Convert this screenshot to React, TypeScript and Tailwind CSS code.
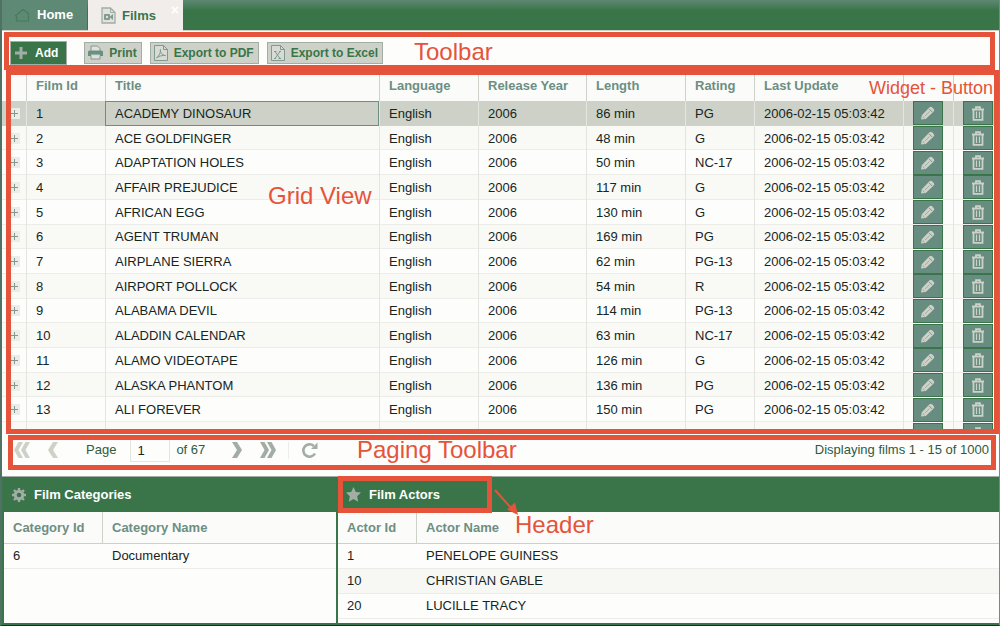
import React from "react";

type Film = { id: number; title: string; length: number; rating: string };

const films: Film[] = [
  { id: 1, title: "ACADEMY DINOSAUR", length: 86, rating: "PG" },
  { id: 2, title: "ACE GOLDFINGER", length: 48, rating: "G" },
  { id: 3, title: "ADAPTATION HOLES", length: 50, rating: "NC-17" },
  { id: 4, title: "AFFAIR PREJUDICE", length: 117, rating: "G" },
  { id: 5, title: "AFRICAN EGG", length: 130, rating: "G" },
  { id: 6, title: "AGENT TRUMAN", length: 169, rating: "PG" },
  { id: 7, title: "AIRPLANE SIERRA", length: 62, rating: "PG-13" },
  { id: 8, title: "AIRPORT POLLOCK", length: 54, rating: "R" },
  { id: 9, title: "ALABAMA DEVIL", length: 114, rating: "PG-13" },
  { id: 10, title: "ALADDIN CALENDAR", length: 63, rating: "NC-17" },
  { id: 11, title: "ALAMO VIDEOTAPE", length: 126, rating: "G" },
  { id: 12, title: "ALASKA PHANTOM", length: 136, rating: "PG" },
  { id: 13, title: "ALI FOREVER", length: 150, rating: "PG" },
];

const actors = [
  { id: 1, name: "PENELOPE GUINESS" },
  { id: 10, name: "CHRISTIAN GABLE" },
  { id: 20, name: "LUCILLE TRACY" },
];

/* ---------- icons ---------- */

function HomeIcon() {
  return (
    <svg width="17" height="16" viewBox="0 0 17 16" fill="none" stroke="#457c5b" strokeWidth="1.2" aria-hidden="true">
      <path d="M1 9 9 2.5l5.5 4V14H2.500V9" />
    </svg>
  );
}

function FilmFileIcon() {
  return (
    <svg width="15" height="17" viewBox="0 0 15 17" aria-hidden="true">
      <path d="M1 1h8.500L14 5.500V16H1Z" fill="#e3e3de" stroke="#a2ada5" strokeWidth="1.300" />
      <path d="M9.500 1v4.500H14" fill="none" stroke="#a2ada5" />
      <rect x="3" y="7" width="6" height="6" rx="1" fill="#7f9a90" />
      <path d="m8.500 10 3.500-3v6Z" fill="#7f9a90" />
      <circle cx="6" cy="10" r="1.200" fill="#e3e3de" />
    </svg>
  );
}

function PlusIcon() {
  return (
    <svg width="12" height="12" viewBox="0 0 12 12" fill="#a2ada5" aria-hidden="true">
      <path d="M4.500 0h3v4.500H12v3H7.500V12h-3V7.500H0v-3h4.500Z" />
    </svg>
  );
}

function PrintIcon() {
  return (
    <svg width="15" height="15" viewBox="0 0 15 15" aria-hidden="true">
      <path d="M3 6V1h6.500L12 3.500V6" fill="#dfe2db" stroke="#7f9a90" />
      <path d="M1.500 5.500h12Q15 5.500 15 7v4h-3V9.500H3V11H0V7q0-1.500 1.500-1.500Z" fill="#6b8f83" />
      <path d="M3 10.500v3.500h9v-3.500" fill="#dfe2db" stroke="#7f9a90" />
    </svg>
  );
}

function FileIcon({ kind }: { kind: "pdf" | "excel" }) {
  return (
    <svg width="14" height="16" viewBox="0 0 14 16" fill="none" stroke="#7f9a90" aria-hidden="true">
      <path d="M.5.5h9l4 4v11H.5Z" fill="#d8dbd3" />
      <path d="M9.500.5v4h4" />
      {kind === "pdf" ? (
        <path d="M2.500 13C5 11 7 7.500 6.500 4.500c-1 2 1.500 6 5 6C8 10 4 11.500 2.500 13Z" />
      ) : (
        <path d="m4 6.500 5 7m0-7-5 7M3 6.500h2.500M8 6.500h2M3 13.500h2M7.500 13.500H10" />
      )}
    </svg>
  );
}

function PencilIcon() {
  return (
    <svg width="16" height="16" viewBox="0 0 16 16" className="shrink-0" aria-hidden="true">
      <path d="m1 14.500.8-4.300L9.500 2.300q1.300-1.300 2.600 0l1.600 1.600q1.300 1.300 0 2.600L5.800 14Z" fill="#cdd1c7" />
      <path d="m5 11 4.500-4.500" stroke="#a2ada5" fill="none" />
      <path d="m9 3.800 3.200 3.200" stroke="#7f9a90" fill="none" />
      <path d="m2.800 11.500 1.700 1.700" stroke="#8fa59b" fill="none" />
    </svg>
  );
}

function TrashIcon() {
  return (
    <svg width="14" height="15" viewBox="0 0 14 15" fill="none" stroke="#cdd1c7" strokeWidth="1.800" className="shrink-0" aria-hidden="true">
      <path d="M1 3.500h12M5 3V1.200h4V3M2.500 4v9.800h9V4" />
      <path d="M5.500 5.500v6.500M8.500 5.500v6.500" strokeWidth="1.200" />
    </svg>
  );
}

function Chevrons({ count, flip, color }: { count: 1 | 2; flip?: boolean; color: string }) {
  const d = count === 1 ? "M0 0h5l5 8-5 8H0l5-8Z" : "M0 0h4.500l4.500 8-4.500 8H0l4.500-8ZM7 0h4.500L16 8l-4.500 8H7l4.500-8Z";
  const width = count === 1 ? 10 : 16;
  return (
    <svg width={width} height="16" viewBox={`0 0 ${width} 16`} fill={color} className={flip ? "rotate-180" : ""} aria-hidden="true">
      <path d={d} />
    </svg>
  );
}

function RefreshIcon() {
  return (
    <svg width="18" height="17" viewBox="0 0 18 17" aria-hidden="true">
      <path d="M12.800 4A6.200 6.200 0 1 0 14 11.500" fill="none" stroke="#a2ada5" strokeWidth="2.600" />
      <path d="M16.500.5v6.500H10Z" fill="#a2ada5" />
    </svg>
  );
}

function GearIcon() {
  return (
    <svg width="14" height="14" viewBox="0 0 14 14" fill="none" stroke="#a2ada5" aria-hidden="true">
      <circle cx="7" cy="7" r="3.800" strokeWidth="3" />
      <path d="M7 0v2M7 12v2M0 7h2M12 7h2M2 2l1.500 1.500M10.500 10.500 12 12M2 12l1.500-1.500M10.500 3.500 12 2" strokeWidth="2.400" />
    </svg>
  );
}

function StarIcon() {
  return (
    <svg width="15" height="15" viewBox="0 0 15 15" fill="#a2ada5" aria-hidden="true">
      <path d="m7.500 0 2.300 4.900 5.200.7-3.800 3.700.9 5.400-4.600-2.600-4.600 2.600.9-5.400L0 5.600l5.200-.7Z" />
    </svg>
  );
}

function ExpandIcon() {
  return (
    <svg width="11" height="11" viewBox="0 0 11 11" aria-hidden="true">
      <rect width="11" height="11" fill="#ecece8" />
      <path d="M5.500 2v7M2 5.500h7" stroke="#7f9a90" />
    </svg>
  );
}

/* ---------- shared pieces ---------- */

const frame = "pointer-events-none absolute z-10 border-[5px] border-[#e5533a]";
const note = "pointer-events-none absolute z-20 whitespace-nowrap text-2xl leading-6 text-[#e5533a]";
const rule = "border-l border-[#e4e5e0]";

function ToolButton({ icon, children }: { icon: React.ReactNode; children: React.ReactNode }) {
  return (
    <button className="flex h-[22px] items-center gap-1.5 border border-[#a2ada5] bg-[#cdd1c7] pr-1 pl-[3px] text-xs font-bold text-[#397548]">
      {icon}
      {children}
    </button>
  );
}

function RowButton({ label, icon }: { label: string; icon: React.ReactNode }) {
  return (
    <button
      aria-label={label}
      className="ml-[9px] flex h-6 w-[30px] items-center justify-center border border-[#397548] bg-[#668d80]"
    >
      {icon}
    </button>
  );
}

function FilmGrid() {
  const headings = ["Film Id", "Title", "Language", "Release Year", "Length", "Rating", "Last Update"];
  return (
    <div className="h-full overflow-hidden">
      <table className="h-[377px] w-full table-fixed border-separate border-spacing-0 text-left">
        <colgroup>
          <col className="w-6" />
          <col className="w-[79px]" />
          <col />
          <col className="w-[99px]" />
          <col className="w-[108px]" />
          <col className="w-[99px]" />
          <col className="w-[69px]" />
          <col className="w-[149px]" />
          <col className="w-[50px]" />
          <col className="w-[46px]" />
        </colgroup>
        <thead>
          <tr className="h-[31px] bg-[#fbfbf9] text-[#6b8f83]">
            <th className="p-0" />
            {headings.map((h) => (
              <th key={h} className="border-l border-[#cdd1c7] p-0 pl-[9px] font-bold">
                {h}
              </th>
            ))}
            <th className="border-l border-[#cdd1c7] p-0" />
            <th className="border-l border-[#cdd1c7] p-0" />
          </tr>
        </thead>
        <tbody>
          {films.map((film, i) => {
            const cell = `${rule} p-0 pt-px pl-[9px]`;
            return (
              <tr
                key={film.id}
                className={
                  i === 0
                    ? "bg-[#cdd1c7]"
                    : i % 2
                      ? "bg-[#f9f9f6] shadow-[inset_0_-1px_#ecece8]"
                      : "bg-[#fdfdfb] shadow-[inset_0_-1px_#ecece8]"
                }
              >
                <td className="p-0 pl-[7px]">
                  <ExpandIcon />
                </td>
                <td className={cell}>{film.id}</td>
                <td className={i === 0 ? "border border-[#6b8f83] p-0 pt-px pl-[9px]" : cell}>{film.title}</td>
                <td className={cell}>English</td>
                <td className={cell}>2006</td>
                <td className={cell}>{film.length} min</td>
                <td className={cell}>{film.rating}</td>
                <td className={cell}>2006-02-15 05:03:42</td>
                <td className={`${rule} p-0`}>
                  <RowButton label={`Edit ${film.title}`} icon={<PencilIcon />} />
                </td>
                <td className={`${rule} p-0`}>
                  <RowButton label={`Delete ${film.title}`} icon={<TrashIcon />} />
                </td>
              </tr>
            );
          })}
          <tr className="bg-[#f9f9f6]">
            <td className="p-0" />
            {headings.map((h) => (
              <td key={h} className={`${rule} p-0`} />
            ))}
            <td className={`${rule} p-0`}>
              <RowButton label="Edit" icon={<PencilIcon />} />
            </td>
            <td className={`${rule} p-0`}>
              <RowButton label="Delete" icon={<TrashIcon />} />
            </td>
          </tr>
        </tbody>
      </table>
    </div>
  );
}

function DetailTable({ heads, rows, firstCol }: { heads: string[]; rows: (string | number)[][]; firstCol: string }) {
  return (
    <table className="w-full table-fixed border-separate border-spacing-0 text-left">
      <colgroup>
        <col className={firstCol} />
        <col />
      </colgroup>
      <thead>
        <tr className="h-8 bg-[#fbfbf9] text-[#6b8f83]">
          {heads.map((h, i) => (
            <th
              key={h}
              className={
                i === 0
                  ? "border-b border-[#cdd1c7] p-0 pl-[9px] font-bold"
                  : "border-b border-l border-[#cdd1c7] p-0 pl-[9px] font-bold"
              }
            >
              {h}
            </th>
          ))}
        </tr>
      </thead>
      <tbody>
        {rows.map((row, i) => (
          <tr key={row[0]} className={i % 2 ? "h-[25px] bg-[#f7f7f4]" : "h-[25px]"}>
            {row.map((value, j) => (
              <td key={j} className={j === 0 ? "border-b border-[#ecece8] p-0 pl-[9px]" : "border-b border-[#ecece8] p-0 pl-2.5"}>
                {value}
              </td>
            ))}
          </tr>
        ))}
      </tbody>
    </table>
  );
}

export default function App() {
  return (
    <div className="flex min-h-screen flex-col border-r border-b border-l-2 border-r-[#6b8f83] border-b-[#1d2a26] border-l-[#4f7264] bg-[#fdfdfb] font-['Liberation_Sans',Arial,sans-serif] text-[13px] leading-4 text-[#16261f]">
      <nav className="flex h-[31px] border-b border-[#cdd1c7] bg-[#397548] bg-linear-to-b from-[#5d8873] from-0% via-[#397548] via-35% to-[#397548]">
        <button className="flex w-[85px] items-center gap-1.5 bg-[#5e8975] pl-3 font-bold text-white">
          <HomeIcon />
          Home
        </button>
        <button className="relative ml-px flex h-[31px] w-[95px] items-center gap-1.5 bg-[#f0edeb] pl-[13px] font-bold text-[#397548]">
          <FilmFileIcon />
          Films
          <span className="absolute top-0 right-1 text-sm font-bold text-white">×</span>
        </button>
      </nav>

      <div className="relative flex h-[39px] items-center gap-2 pt-1 pl-2">
        <div className="pr-[9px]">
          <button className="flex h-6 items-center gap-2 border border-[#a2ada5] bg-[#397548] pr-2 pl-1 text-xs font-bold text-white">
            <PlusIcon />
            Add
          </button>
        </div>
        <ToolButton icon={<PrintIcon />}>Print</ToolButton>
        <ToolButton icon={<FileIcon kind="pdf" />}>Export to PDF</ToolButton>
        <ToolButton icon={<FileIcon kind="excel" />}>Export to Excel</ToolButton>
        <div className={`${frame} top-px right-1 bottom-0 left-0.5`} />
        <p className={`${note} top-[9px] left-[412px]`}>Toolbar</p>
      </div>

      <section className="relative h-[364px]">
        <FilmGrid />
        <div className={`${frame} inset-y-0 right-0 left-1`} />
        <p className={`${note} top-[114px] left-[266px]`}>Grid View</p>
        <p className="pointer-events-none absolute top-1 right-1.5 z-20 text-lg leading-7 text-[#e5533a]">Widget - Button</p>
      </section>

      <div className="relative h-[42px]">
        <div className="flex h-8 items-center text-[#2f5a41]">
          <button aria-label="First page" className="ml-3">
            <Chevrons count={2} flip color="#cdd1c7" />
          </button>
          <button aria-label="Previous page" className="ml-[18px]">
            <Chevrons count={1} flip color="#cdd1c7" />
          </button>
          <label htmlFor="page" className="ml-7">
            Page
          </label>
          <input
            id="page"
            defaultValue="1"
            className="ml-3.5 h-6 w-10 border border-[#e4e5e0] bg-[#fdfdfb] pl-1.5 text-[#16261f]"
          />
          <span className="ml-1.5">of 67</span>
          <button aria-label="Next page" className="ml-[27px]">
            <Chevrons count={1} color="#a2ada5" />
          </button>
          <button aria-label="Last page" className="ml-[18px]">
            <Chevrons count={2} color="#a2ada5" />
          </button>
          <button aria-label="Refresh" className="ml-3 border-l border-[#ecece8] pl-3">
            <RefreshIcon />
          </button>
          <p className="mr-2.5 ml-auto">Displaying films 1 - 15 of 1000</p>
        </div>
        <div className={`${frame} top-px right-[3px] bottom-1.5 left-1.5`} />
        <p className={`${note} top-1 left-[355px]`}>Paging Toolbar</p>
      </div>

      <div className="flex flex-1 border-t border-[#a2ada5]">
        <section className="flex w-[336px] flex-col">
          <h2 className="flex h-[35px] items-center gap-2 bg-[#397548] pl-2.5 font-bold text-white">
            <GearIcon />
            Film Categories
          </h2>
          <div className="flex-1 border-x-2 border-b-2 border-[#397548]">
            <DetailTable heads={["Category Id", "Category Name"]} rows={[[6, "Documentary"]]} firstCol="w-[98px]" />
          </div>
        </section>
        <section className="relative flex flex-1 flex-col">
          <h2 className="flex h-[35px] items-center gap-2 bg-[#397548] pl-2 font-bold text-white">
            <StarIcon />
            Film Actors
          </h2>
          <div className="flex-1 border-b-2 border-[#397548]">
            <DetailTable heads={["Actor Id", "Actor Name"]} rows={actors.map((a) => [a.id, a.name])} firstCol="w-[78px]" />
          </div>
          <div className={`${frame} -top-px left-0 h-[37px] w-[154px]`} />
          <svg className="pointer-events-none absolute top-3 left-[156px] z-20" width="28" height="28" viewBox="0 0 28 28" aria-hidden="true">
            <path d="m1 1 17 19" stroke="#e5533a" strokeWidth="2" />
            <path d="m24 26-11-5.500 8-7Z" fill="#e5533a" />
          </svg>
          <p className={`${note} top-9 left-[177px]`}>Header</p>
        </section>
      </div>
    </div>
  );
}
